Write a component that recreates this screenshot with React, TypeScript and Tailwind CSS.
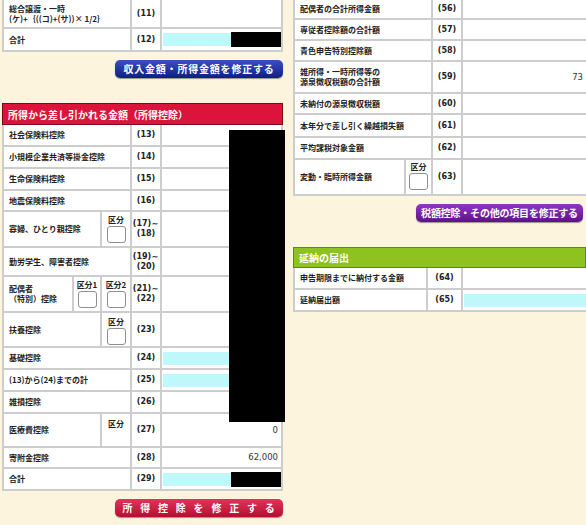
import type { ReactNode } from "react";

const line = "border-[#cdcdcd]";

const Row = ({ h, children, last }: { h: string; children: ReactNode; last?: boolean }) => (
  <div className={`flex ${h} ${last ? "" : "border-b-2"} ${line}`}>{children}</div>
);

const Label = ({ w, children }: { w: string; children: ReactNode }) => (
  <div className={`${w} shrink-0 border-r-2 ${line} flex items-center pl-[5px] leading-[10px] text-[8px] font-bold text-[#222]`}>
    <div>{children}</div>
  </div>
);

const Num = ({ w = "w-[30px]", children }: { w?: string; children: ReactNode }) => (
  <div className={`${w} shrink-0 border-r-2 ${line} flex items-center justify-center text-center leading-[10px] text-[8px] font-bold text-[#222] [font-family:'DejaVu_Sans',sans-serif]`}>
    <div>{children}</div>
  </div>
);

const Kubun = ({ w, label = "区分", box = true, pt = "pt-[3px]" }: { w: string; label?: string; box?: boolean; pt?: string }) => (
  <div className={`${w} shrink-0 border-r-2 ${line} flex flex-col items-center ${pt} gap-[1px] text-[8px] leading-[10px] font-bold text-[#222]`}>
    <span>{label}</span>
    {box && <div className="w-[19px] h-[17px] bg-white border border-[#8f8f8f] rounded-[3px]" />}
  </div>
);

const Value = ({ children }: { children?: ReactNode }) => (
  <div className="flex-1 flex items-center justify-end pr-[3px] text-[8.5px] text-[#333] [font-family:'DejaVu_Sans',sans-serif]">
    {children}
  </div>
);

const Cyan = ({ black }: { black?: boolean }) => (
  <div className="flex-1 flex items-center pl-[1px]">
    <div className="flex-1 h-[13px] bg-[#bff8fb]" />
    {black && <div className="w-[50px] h-[15px] bg-black" />}
  </div>
);

const LW = "w-[128px]";
const RW = "w-[138px]";

export default function App() {
  return (
    <div className="w-[586px] h-[525px] overflow-hidden bg-[#fcf4dd] flex gap-[10px] pl-[2px] [font-family:'Noto_Sans_CJK_JP',sans-serif]">
      {/* left column */}
      <div className="w-[281px] shrink-0 flex flex-col">
        <div className={`bg-white border-x-2 border-b-2 ${line}`}>
          <Row h="h-[29px]">
            <Label w={LW}>
              総合譲渡・一時
              <br />
              (ケ)+｛((コ)+(サ))× 1/2｝
            </Label>
            <Num>(11)</Num>
            <Value />
          </Row>
          <Row h="h-[21px]" last>
            <Label w={LW}>合計</Label>
            <Num>(12)</Num>
            <Cyan black />
          </Row>
        </div>

        <button className="mt-[8px] ml-auto w-[168px] h-[18px] rounded-[5px] bg-linear-to-b from-[#3b4fc4] to-[#0f1d86] text-white text-[10px] font-bold tracking-[0.8px] leading-none shadow-[0_1px_1px_rgba(0,0,0,0.4)]">
          収入金額・所得金額を修正する
        </button>

        <div className="mt-[25px] h-[22px] bg-[#dc143c] border border-[#7c0a1c] flex items-center pl-[5px] text-white text-[10px] font-bold">
          所得から差し引かれる金額（所得控除）
        </div>

        <div className={`relative bg-white border-x-2 border-b-2 ${line}`}>
          <Row h="h-[22px]"><Label w={LW}>社会保険料控除</Label><Num>(13)</Num><Value /></Row>
          <Row h="h-[22px]"><Label w={LW}>小規模企業共済等掛金控除</Label><Num>(14)</Num><Value /></Row>
          <Row h="h-[22px]"><Label w={LW}>生命保険料控除</Label><Num>(15)</Num><Value /></Row>
          <Row h="h-[21px]"><Label w={LW}>地震保険料控除</Label><Num>(16)</Num><Value /></Row>
          <Row h="h-[36px]">
            <Label w="w-[98px]">寡婦、ひとり親控除</Label>
            <Kubun w="w-[30px]" />
            <Num>(17)～<br />(18)</Num>
            <Value />
          </Row>
          <Row h="h-[29px]"><Label w={LW}>勤労学生、障害者控除</Label><Num>(19)～<br />(20)</Num><Value /></Row>
          <Row h="h-[36px]">
            <Label w="w-[70px]">配偶者<br />（特別）控除</Label>
            <Kubun w="w-[28px]" label="区分1" />
            <Kubun w="w-[30px]" label="区分2" />
            <Num>(21)～<br />(22)</Num>
            <Value />
          </Row>
          <Row h="h-[35px]">
            <Label w="w-[98px]">扶養控除</Label>
            <Kubun w="w-[30px]" pt="pt-[4px]" />
            <Num>(23)</Num>
            <Value />
          </Row>
          <Row h="h-[22px]"><Label w={LW}>基礎控除</Label><Num>(24)</Num><Cyan /></Row>
          <Row h="h-[22px]"><Label w={LW}>(13)から(24)までの計</Label><Num>(25)</Num><Cyan /></Row>
          <Row h="h-[22px]"><Label w={LW}>雑損控除</Label><Num>(26)</Num><Value /></Row>
          <Row h="h-[34px]">
            <Label w="w-[98px]">医療費控除</Label>
            <Kubun w="w-[30px]" box={false} pt="pt-[5px]" />
            <Num>(27)</Num>
            <Value>0</Value>
          </Row>
          <Row h="h-[21px]"><Label w={LW}>寄附金控除</Label><Num>(28)</Num><Value>62,000</Value></Row>
          <Row h="h-[20px]" last><Label w={LW}>合計</Label><Num>(29)</Num><Cyan black /></Row>

          {/* redacted block */}
          <div className="absolute top-[5px] left-[225px] w-[56px] h-[292px] bg-black" />
        </div>

        <button className="mt-[8px] ml-auto w-[168px] h-[18px] rounded-[5px] bg-linear-to-b from-[#e23358] to-[#b30d31] text-white text-[10px] font-bold tracking-[7.8px] pl-[7px] leading-none shadow-[0_1px_1px_rgba(0,0,0,0.4)]">
          所得控除を修正する
        </button>
      </div>

      {/* right column */}
      <div className="w-[293px] shrink-0 flex flex-col">
        <div className={`bg-white border-l-2 border-b-2 ${line}`}>
          <Row h="h-[20px]"><Label w={RW}>配偶者の合計所得金額</Label><Num>(56)</Num><Value /></Row>
          <Row h="h-[21px]"><Label w={RW}>専従者控除額の合計額</Label><Num>(57)</Num><Value /></Row>
          <Row h="h-[21px]"><Label w={RW}>青色申告特別控除額</Label><Num>(58)</Num><Value /></Row>
          <Row h="h-[32px]">
            <Label w={RW}>雑所得・一時所得等の<br />源泉徴収税額の合計額</Label>
            <Num>(59)</Num>
            <Value>73</Value>
          </Row>
          <Row h="h-[21px]"><Label w={RW}>未納付の源泉徴収税額</Label><Num>(60)</Num><Value /></Row>
          <Row h="h-[23px]"><Label w={RW}>本年分で差し引く繰越損失額</Label><Num>(61)</Num><Value /></Row>
          <Row h="h-[22px]"><Label w={RW}>平均課税対象金額</Label><Num>(62)</Num><Value /></Row>
          <Row h="h-[34px]" last>
            <Label w="w-[111px]">変動・臨時所得金額</Label>
            <Kubun w="w-[27px]" pt="pt-[2px]" />
            <Num>(63)</Num>
            <Value />
          </Row>
        </div>

        <button className="mt-[8px] ml-auto mr-[3px] w-[167px] h-[18px] rounded-[5px] bg-linear-to-b from-[#9335c4] to-[#5c128a] text-white text-[10px] font-bold tracking-[-0.2px] leading-none shadow-[0_1px_1px_rgba(0,0,0,0.4)]">
          税額控除・その他の項目を修正する
        </button>

        <div className="mt-[25px] h-[21px] bg-[#8dc21f] border border-[#5b8a16] flex items-center pl-[5px] text-white text-[10px] font-bold">
          延納の届出
        </div>
        <div className={`bg-white border-l-2 border-b-2 ${line}`}>
          <Row h="h-[22px]"><Label w="w-[133px]">申告期限までに納付する金額</Label><Num w="w-[35px]">(64)</Num><Value /></Row>
          <Row h="h-[20px]" last><Label w="w-[133px]">延納届出額</Label><Num w="w-[35px]">(65)</Num><Cyan /></Row>
        </div>
      </div>
    </div>
  );
}
